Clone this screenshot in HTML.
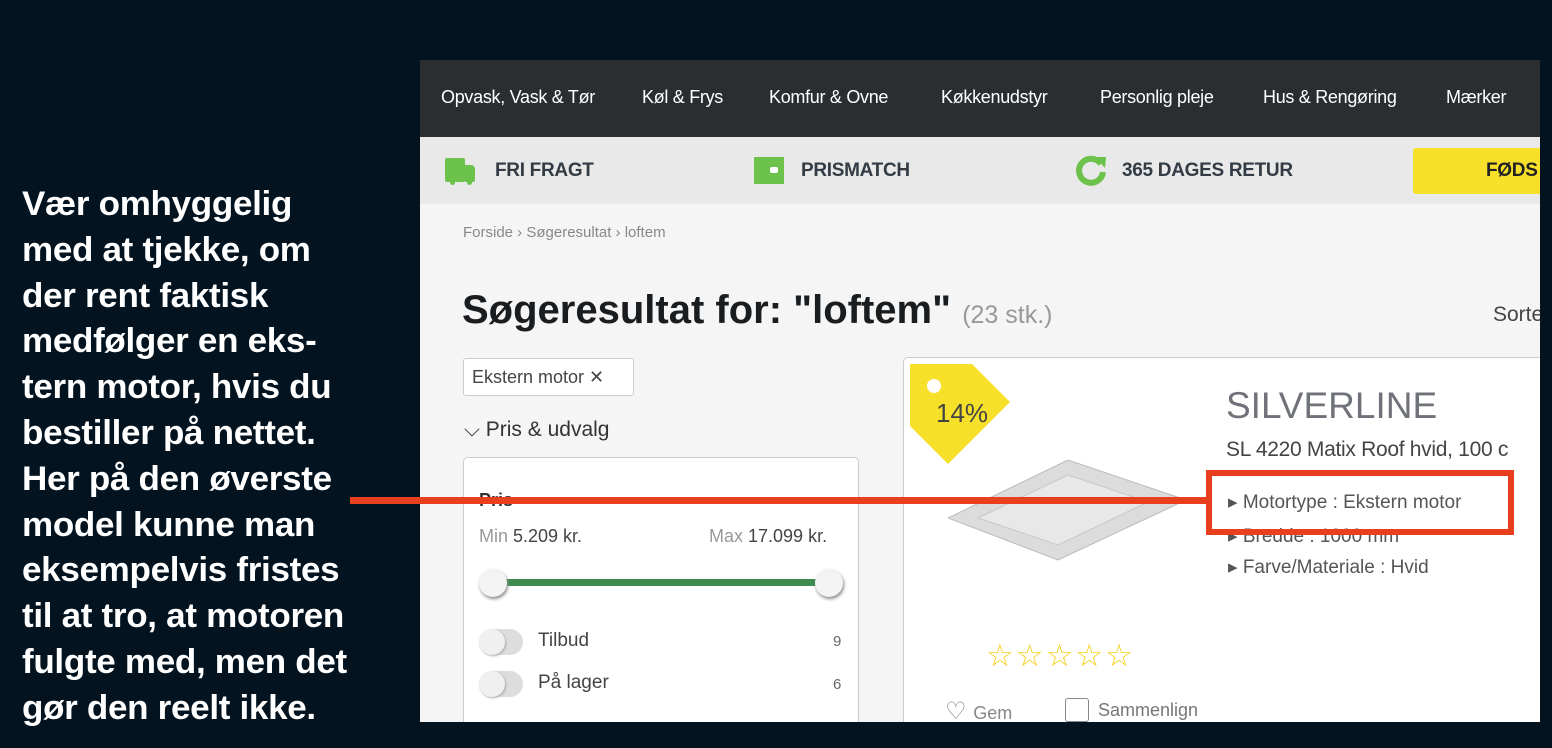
<!DOCTYPE html>
<html><head><meta charset="utf-8"><style>
*{margin:0;padding:0;box-sizing:border-box}
body{width:1552px;height:748px;background:#03131f;position:relative;overflow:hidden;font-family:"Liberation Sans",sans-serif}
.a{position:absolute;white-space:nowrap}
.cap{left:22px;color:#fff;font-weight:bold;font-size:34px;line-height:45.8px;transform:scaleX(1.03);transform-origin:left top;letter-spacing:-0.3px}
#shot{position:absolute;left:420px;top:60px;width:1120px;height:662px;background:#f5f5f5;overflow:hidden}
.nav{position:absolute;left:0;top:0;width:1120px;height:77px;background:#2b2e30}
.nav span{position:absolute;top:27px;color:#fff;font-size:18px;letter-spacing:-0.3px}
.trust{position:absolute;left:0;top:77px;width:1120px;height:67px;background:#e8e9e8}
.trust b{position:absolute;top:23px;font-size:19px;color:#333b44;letter-spacing:-0.3px}
.g{color:#888;font-size:16px}
</style></head><body>
<div class="a cap" style="top:182px">Vær omhyggelig<br>med at tjekke, om<br>der rent faktisk<br>medfølger en eks-<br>tern motor, hvis du<br>bestiller på nettet.<br>Her på den øverste<br>model kunne man<br>eksempelvis fristes<br>til at tro, at motoren<br>fulgte med, men det<br>gør den reelt ikke.</div>

<div id="shot">
 <div class="nav">
  <span style="left:21px">Opvask, Vask &amp; Tør</span>
  <span style="left:222px">Køl &amp; Frys</span>
  <span style="left:349px">Komfur &amp; Ovne</span>
  <span style="left:521px">Køkkenudstyr</span>
  <span style="left:680px">Personlig pleje</span>
  <span style="left:843px">Hus &amp; Rengøring</span>
  <span style="left:1026px">Mærker</span>
 </div>
 <div class="trust">
  <div class="a" style="left:25px;top:21px;width:20px;height:24px;background:#6cc24a;border-radius:2px"></div>
  <div class="a" style="left:45px;top:28px;width:10px;height:17px;background:#6cc24a;border-radius:0 4px 2px 0"></div>
  <div class="a" style="left:30px;top:44px;width:5px;height:4px;background:#6cc24a;border-radius:0 0 3px 3px"></div>
  <div class="a" style="left:47px;top:44px;width:5px;height:4px;background:#6cc24a;border-radius:0 0 3px 3px"></div>
  <b style="left:75px">FRI FRAGT</b>
  <div class="a" style="left:334px;top:20px;width:30px;height:27px;background:#6cc24a"></div>
  <div class="a" style="left:350px;top:30px;width:8px;height:6px;background:#fff;border-radius:2px"></div>
  <b style="left:381px">PRISMATCH</b>
  <svg class="a" style="left:654px;top:16px" width="34" height="34" viewBox="0 0 34 34"><path d="M27 11 A12 12 0 1 0 29 19" fill="none" stroke="#6cc24a" stroke-width="6"/><path d="M21 4 L32 4 L31 15 Z" fill="#6cc24a"/></svg>
  <b style="left:702px">365 DAGES RETUR</b>
  <div class="a" style="left:993px;top:11px;width:140px;height:46px;background:#f7e02a;border-radius:3px"></div>
  <b style="left:1066px;color:#222">FØDS</b>
 </div>
 <div class="a g" style="left:43px;top:164px;font-size:15px">Forside › Søgeresultat › loftem</div>
 <div class="a" style="left:42px;top:228px;font-size:40px;font-weight:bold;color:#1a1d20;letter-spacing:0">Søgeresultat for: "loftem" <span style="font-size:25px;font-weight:normal;color:#999">(23 stk.)</span></div>
 <div class="a" style="left:1073px;top:243px;font-size:21px;color:#444">Sorte</div>
 <div class="a" style="left:43px;top:298px;width:171px;height:38px;background:#fff;border:1px solid #ccc;border-radius:3px;font-size:18px;color:#444;padding:8px 8px">Ekstern motor ✕</div>
 <div class="a" style="left:44px;top:358px;font-size:21px;color:#333">⌵ Pris &amp; udvalg</div>
 <div class="a" style="left:43px;top:397px;width:396px;height:300px;background:#fff;border:1px solid #ccc;border-radius:5px"></div>
 <div class="a" style="left:59px;top:430px;font-size:18px;color:#333;font-weight:bold">Pris</div>
 <div class="a" style="left:59px;top:466px;font-size:18px;color:#999">Min <span style="color:#444">5.209 kr.</span></div>
 <div class="a" style="left:289px;top:466px;font-size:18px;color:#999">Max <span style="color:#444">17.099 kr.</span></div>
 <div class="a" style="left:73px;top:519px;width:336px;height:7px;background:#3d8b4f"></div>
 <div class="a" style="left:59px;top:509px;width:28px;height:28px;border-radius:50%;background:#f3f3f3;box-shadow:1px 2px 3px #888"></div>
 <div class="a" style="left:395px;top:509px;width:28px;height:28px;border-radius:50%;background:#f3f3f3;box-shadow:1px 2px 3px #888"></div>
 <div class="a" style="left:59px;top:569px;width:44px;height:26px;border-radius:13px;background:#ddd"></div>
 <div class="a" style="left:59px;top:569px;width:26px;height:26px;border-radius:50%;background:#f0f0f0;box-shadow:1px 1px 2px #aaa"></div>
 <div class="a" style="left:118px;top:570px;font-size:19px;color:#444">Tilbud</div>
 <div class="a" style="left:413px;top:573px;font-size:15px;color:#666">9</div>
 <div class="a" style="left:59px;top:611px;width:44px;height:26px;border-radius:13px;background:#ddd"></div>
 <div class="a" style="left:59px;top:611px;width:26px;height:26px;border-radius:50%;background:#f0f0f0;box-shadow:1px 1px 2px #aaa"></div>
 <div class="a" style="left:118px;top:612px;font-size:19px;color:#444">På lager</div>
 <div class="a" style="left:413px;top:616px;font-size:15px;color:#666">6</div>
 <div class="a" style="left:483px;top:297px;width:660px;height:400px;background:#fff;border:1px solid #ccc;border-radius:5px"></div>
 <svg class="a" style="left:490px;top:304px" width="102" height="102" viewBox="0 0 102 102"><path d="M0 0 L62 0 L100 38 L38 100 L0 62 Z" fill="#f7e02a"/><circle cx="24" cy="22" r="7" fill="#fff"/></svg>
 <div class="a" style="left:516px;top:338px;font-size:26px;color:#444">14%</div>
 <svg class="a" style="left:528px;top:400px" width="240" height="110" viewBox="0 0 240 110"><path d="M0 58 L120 0 L238 40 L110 100 Z" fill="#dcdcdc" stroke="#bbb"/><path d="M30 58 L120 15 L200 42 L110 85 Z" fill="#e8e8e8" stroke="#c8c8c8"/></svg>
 <div class="a" style="left:806px;top:325px;font-size:37px;color:#6f7278">SILVERLINE</div>
 <div class="a" style="left:806px;top:378px;font-size:21px;color:#444;letter-spacing:-0.3px">SL 4220 Matix Roof hvid, 100 c</div>
 <div class="a" style="left:808px;top:431px;font-size:19px;color:#555">▸ Motortype : Ekstern motor</div>
 <div class="a" style="left:808px;top:465px;font-size:19px;color:#555">▸ Bredde : 1000 mm</div>
 <div class="a" style="left:808px;top:496px;font-size:19px;color:#555">▸ Farve/Materiale : Hvid</div>
 <div class="a" style="left:566px;top:578px;font-size:31px;color:#f5d11b;letter-spacing:2px">☆☆☆☆☆</div>
 <div class="a" style="left:525px;top:637px;font-size:24px;color:#888">♡ <span style="font-size:18px">Gem</span></div>
 <div class="a" style="left:645px;top:638px;width:24px;height:24px;border:1px solid #888;border-radius:3px;background:#fff"></div>
 <div class="a" style="left:678px;top:640px;font-size:18px;color:#777">Sammenlign</div>
</div>
<div class="a" style="left:1206px;top:470px;width:308px;height:65px;border:6px solid #e8401f"></div>
<div class="a" style="left:350px;top:497px;width:858px;height:7px;background:#e8401f"></div>
</body></html>
